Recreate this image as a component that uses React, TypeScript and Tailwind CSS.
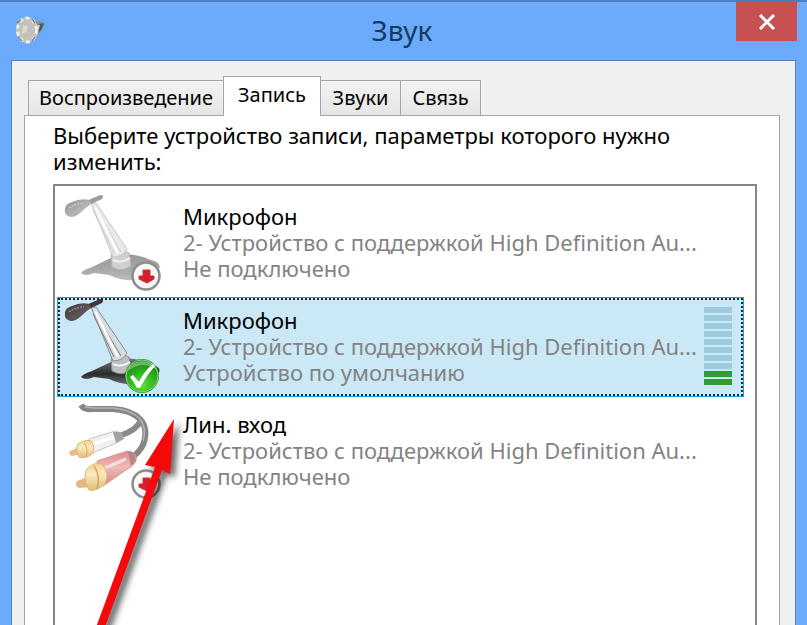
import { useState } from "react";
import clsx from "clsx";

type Badge = "unplugged" | "default";

const tabs = ["Воспроизведение", "Запись", "Звуки", "Связь"];

const devices: { name: string; status: string; icon: "mic" | "line"; badge: Badge }[] = [
  { name: "Микрофон", status: "Не подключено", icon: "mic", badge: "unplugged" },
  { name: "Микрофон", status: "Устройство по умолчанию", icon: "mic", badge: "default" },
  { name: "Лин. вход", status: "Не подключено", icon: "line", badge: "unplugged" },
];

function SpeakerIcon() {
  return (
    <svg width="32" height="32" viewBox="0 0 32 32" aria-hidden="true">
      <path d="M19 6 L28 8 L30 10 L26 19 L19 25 Z" fill="#8b8f8c" />
      <path d="M25 10 L30 9 L28 15 L25 18 Z" fill="#4f5a60" />
      <path d="M20 12 L26 11 L25 15 L20 18 Z" fill="#d8d4c4" />
      <ellipse cx="13" cy="16" rx="11" ry="13" fill="#c2c3bd" />
      <ellipse cx="13" cy="16" rx="9.5" ry="12" fill="none" stroke="#eeeee8" strokeWidth="3" strokeDasharray="4 3" />
      <ellipse cx="12" cy="16" rx="6" ry="8" fill="#c4c2b8" />
      <path d="M9 11 L14 13 L12 18 L8 20 Z" fill="#dedbd0" />
      <path d="M3 9 L7 6 M4 23 L8 27 M18 5 L21 9 M18 27 L21 23" stroke="#7d868a" strokeWidth="1.5" />
    </svg>
  );
}

function StatusBadge({ type }: { type: Badge }) {
  if (type === "default") {
    return (
      <g>
        <circle cx="81" cy="79" r="17" fill="#1f9a1a" />
        <circle cx="81" cy="79" r="16" fill="url(#green)" stroke="#8fd18a" strokeWidth="1" />
        <path d="M66 75 Q80 62 96 73 Q92 64 81 64 Q69 65 66 75 Z" fill="#ffffff" opacity="0.35" />
        <path d="M69 80 L72 78 L78 85 Q83 74 92 67 L94 69 Q85 79 79 91 L76 91 Q73 85 69 80 Z" fill="#ffffff" />
      </g>
    );
  }
  return (
    <g>
      <circle cx="85" cy="83" r="13.5" fill="#f7f7f7" stroke="#8d8d8d" strokeWidth="2.5" />
      <path d="M82 77 H89 V83 H93 V86 L86 90 L78 86 V83 H82 Z" fill="#d5202c" stroke="#c2303a" strokeWidth="1" />
    </g>
  );
}

function MicIcon({ badge }: { badge: Badge }) {
  const dim = badge === "unplugged";
  return (
    <svg width="104" height="100" viewBox="0 0 104 100" className="shrink-0" aria-hidden="true">
      <defs>
        <linearGradient id={dim ? "headDim" : "head"} x1="0" y1="0" x2="1" y2="1">
          <stop offset="0" stopColor={dim ? "#8f8f8f" : "#3a3637"} />
          <stop offset="0.6" stopColor={dim ? "#b5b5b5" : "#5d5759"} />
          <stop offset="1" stopColor={dim ? "#a0a0a0" : "#2b292b"} />
        </linearGradient>
        <linearGradient id={dim ? "baseDim" : "base"} x1="0" y1="0" x2="0" y2="1">
          <stop offset="0" stopColor={dim ? "#989898" : "#77787c"} />
          <stop offset="0.6" stopColor={dim ? "#a9a9a9" : "#2c2a2f"} />
          <stop offset="1" stopColor={dim ? "#bcbcbc" : "#6b6b72"} />
        </linearGradient>
        <radialGradient id="green" cx="0.5" cy="0.8" r="0.8">
          <stop offset="0" stopColor="#5fe03c" />
          <stop offset="0.55" stopColor="#2db11f" />
          <stop offset="1" stopColor="#14800f" />
        </radialGradient>
      </defs>
      <path
        d="M20 80 Q22 77 31 74 L52 64 Q68 58 90 67 Q101 70 98 76 L72 87 Q60 88 48 82 L33 80 Q24 84 20 80 Z"
        fill={dim ? "url(#baseDim)" : "url(#base)"}
      />
      <path
        d="M50 62 Q58 54 68 60 L70 73 Q61 80 51 74 Z"
        fill={dim ? "#d0d0d0" : "#bfc0c4"}
        stroke={dim ? "#b5b5b5" : "#87878c"}
      />
      <path d="M52 67 Q60 71 69 65" fill="none" stroke={dim ? "#f1f1f1" : "#f4f4f4"} strokeWidth="2" />
      <path d="M30 10 L35 10 L66 56 Q62 64 52 64 Z" fill={dim ? "#e9e9e9" : "#d6dbe0"} stroke={dim ? "#c6c6c6" : "#8c8c90"} />
      <path d="M33 14 L60 59 M32 17 L53 60" fill="none" stroke={dim ? "#cccccc" : "#7d7a7c"} strokeWidth="1" />
      <path d="M34 14 L57 60" fill="none" stroke="#ffffff" strokeWidth="2.5" />
      <path d="M25 8 L39 2 Q44 2 41 6 L30 11 Z" fill={dim ? "#9d9d9d" : "#3a393d"} />
      <path
        d="M4 16 Q4 11 11 9 Q20 5 28 7 L30 11 Q24 15 19 20 Q12 26 7 23 Q3 21 4 16 Z"
        fill={dim ? "url(#headDim)" : "url(#head)"}
      />
      <path d="M8 15 Q15 10 23 10" fill="none" stroke={dim ? "#c8c8c8" : "#918b8d"} strokeWidth="1.5" strokeDasharray="2 1" />
      <StatusBadge type={badge} />
    </svg>
  );
}

function LineInIcon() {
  return (
    <svg width="104" height="100" viewBox="0 0 104 100" className="shrink-0" aria-hidden="true">
      <defs>
        <linearGradient id="gold" x1="0" y1="0" x2="0" y2="1">
          <stop offset="0" stopColor="#f2d28c" />
          <stop offset="0.4" stopColor="#fbeac0" />
          <stop offset="1" stopColor="#e3bb78" />
        </linearGradient>
        <linearGradient id="red" x1="0" y1="0" x2="0" y2="1">
          <stop offset="0" stopColor="#d98a8a" />
          <stop offset="0.45" stopColor="#efbab8" />
          <stop offset="1" stopColor="#d98482" />
        </linearGradient>
      </defs>
      <path d="M80 18 Q77 29 58 35" fill="none" stroke="#8a8a8a" strokeWidth="6" />
      <path
        d="M20 4 Q23 9 31 8 L52 8 Q70 9 79 18 Q88 28 82 44 Q78 52 70 57"
        fill="none"
        stroke="#868686"
        strokeWidth="6"
      />
      <path d="M24 6 Q28 7 34 7 L52 7 Q71 9 79 18 Q86 27 82 40" fill="none" stroke="#b4b4b4" strokeWidth="1.5" />
      <path d="M28 38 L54 30 Q60 30 60 36 Q60 41 55 42 L32 52 Z" fill="#f0f0f0" stroke="#c4c4c4" />
      <path d="M52 31 L61 31 L63 38 L55 42 Z" fill="#a4a4a4" />
      <path d="M32 43 L53 36" stroke="#ffffff" strokeWidth="3" />
      <path d="M18 46 L9 50 Q7 54 11 55 L20 53 Z" fill="#e9bd87" />
      <path d="M17 43 Q24 38 30 40 Q35 46 31 53 Q25 58 18 56 Q14 50 17 43 Z" fill="url(#gold)" stroke="#e0b672" />
      <path d="M23 42 Q28 48 25 56" fill="none" stroke="#d6aa64" />
      <path d="M36 60 L66 50 Q77 51 75 60 Q72 66 65 69 L42 85 Z" fill="url(#red)" stroke="#d99a98" />
      <path d="M67 50 L73 52 L75 60 L70 65 Z" fill="#b88583" />
      <path d="M42 68 L65 58" stroke="#f8dedc" strokeWidth="3" />
      <path d="M27 76 L16 80 Q13 85 18 87 L29 86 Z" fill="#e7b683" />
      <path d="M25 69 Q33 60 41 63 Q49 72 44 83 Q35 91 28 89 Q22 80 25 69 Z" fill="url(#gold)" stroke="#dfb574" />
      <path d="M33 65 Q40 75 36 88" fill="none" stroke="#d6a45c" strokeWidth="1.5" />
      <StatusBadge type="unplugged" />
    </svg>
  );
}

function LevelMeter({ level }: { level: number }) {
  return (
    <div className="flex flex-col gap-0.5 w-7 mr-2 mb-0.5 shrink-0">
      {Array.from({ length: 10 }, (_, i) => (
        <div key={i} className={clsx("h-1.5", i >= 10 - level ? "bg-[#339b33]" : "bg-[#9ecbdb]")} />
      ))}
    </div>
  );
}

// Red pointer drawn over the last row, towards the selected device
function PointerArrow() {
  return (
    <svg
      width="140"
      height="240"
      viewBox="0 0 140 240"
      className="absolute left-1 top-0 pointer-events-none drop-shadow-[5px_4px_3px_rgba(0,0,0,0.6)]"
      aria-hidden="true"
    >
      <path d="M113 18 L84 64 L94 66 L30 240 L39 240 L101 69 L109 73 Z" fill="#f40a0a" />
    </svg>
  );
}

export default function App() {
  const [activeTab, setActiveTab] = useState(1);
  const [selected, setSelected] = useState(1);

  return (
    <div className="flex flex-col h-screen overflow-hidden bg-[#6caafb] border-t-2 border-[#4a7fc4] text-black font-['Noto_Sans',sans-serif]">
      {/* Title bar */}
      <header className="flex items-start h-[58px] shrink-0">
        <div className="flex w-17 pl-3.5 pt-3">
          <SpeakerIcon />
        </div>
        <h1 className="flex-1 pt-2 text-center text-[28px] leading-10 text-[#153a63]">Звук</h1>
        <button
          type="button"
          aria-label="Закрыть"
          className="flex items-center justify-center w-[61px] h-[39px] mr-2.5 bg-[#c75050]"
        >
          <svg width="18" height="16" viewBox="0 0 18 16" aria-hidden="true">
            <path d="M2 1 L16 15 M16 1 L2 15" stroke="#ffffff" strokeWidth="3" />
          </svg>
        </button>
      </header>

      <main className="flex flex-col flex-1 mx-[11px] pl-3 pr-[15px] pt-[15px] bg-[#f0f0f0] border-x border-t border-[#4f83c6]">
        <div role="tablist" className="flex items-end h-10 pl-1 -mb-px relative z-10">
          {tabs.map((tab, i) => (
            <button
              key={tab}
              type="button"
              role="tab"
              aria-selected={i === activeTab}
              onClick={() => setActiveTab(i)}
              className={clsx(
                "min-w-20 border-[#a5a5a5] text-[20px] leading-7 whitespace-nowrap",
                i === activeTab
                  ? "h-10 px-3.5 pb-1 bg-white border-x border-t"
                  : "h-9 px-2.5 bg-linear-to-b from-[#f2f2f2] to-[#e6e6e6] border",
                i > activeTab && "border-l-0",
                i < activeTab && "border-r-0"
              )}
            >
              {tab}
            </button>
          ))}
        </div>

        <section role="tabpanel" className="flex flex-col flex-1 pl-7 pr-[22px] pt-1.5 bg-white border-x border-t border-[#a5a5a5]">
          <p id="hint" className="text-[22px] leading-[26px]">
            Выберите устройство записи, параметры которого нужно изменить:
          </p>

          <div
            role="listbox"
            aria-labelledby="hint"
            className="flex flex-col flex-1 gap-1 mt-2.5 pt-[7px] pl-0.5 pr-[11px] border-x-2 border-t-2 border-[#868686]"
          >
            {devices.map((device, i) => (
              <div key={i} className="relative">
                <button
                  type="button"
                  role="option"
                  aria-selected={i === selected}
                  onClick={() => setSelected(i)}
                  className={clsx(
                    "flex items-center w-full h-25 px-[3px] text-left overflow-hidden border",
                    i === selected
                      ? "bg-[#cbe8f6] border-[#26a0da] outline-2 -outline-offset-3 outline-dotted outline-[#0b2c46]"
                      : "border-transparent"
                  )}
                >
                  {device.icon === "mic" ? <MicIcon badge={device.badge} /> : <LineInIcon />}
                  <span className="flex-1 min-w-0 pl-[18px] pb-0.5 text-[22px] leading-[26px] text-[#838383]">
                    <span className="block text-black">{device.name}</span>
                    <span className="block whitespace-nowrap">2- Устройство с поддержкой High Definition Au...</span>
                    <span className="block">{device.status}</span>
                  </span>
                  {device.badge === "default" && <LevelMeter level={2} />}
                </button>
                {i === devices.length - 1 && <PointerArrow />}
              </div>
            ))}
          </div>
        </section>
      </main>
    </div>
  );
}
